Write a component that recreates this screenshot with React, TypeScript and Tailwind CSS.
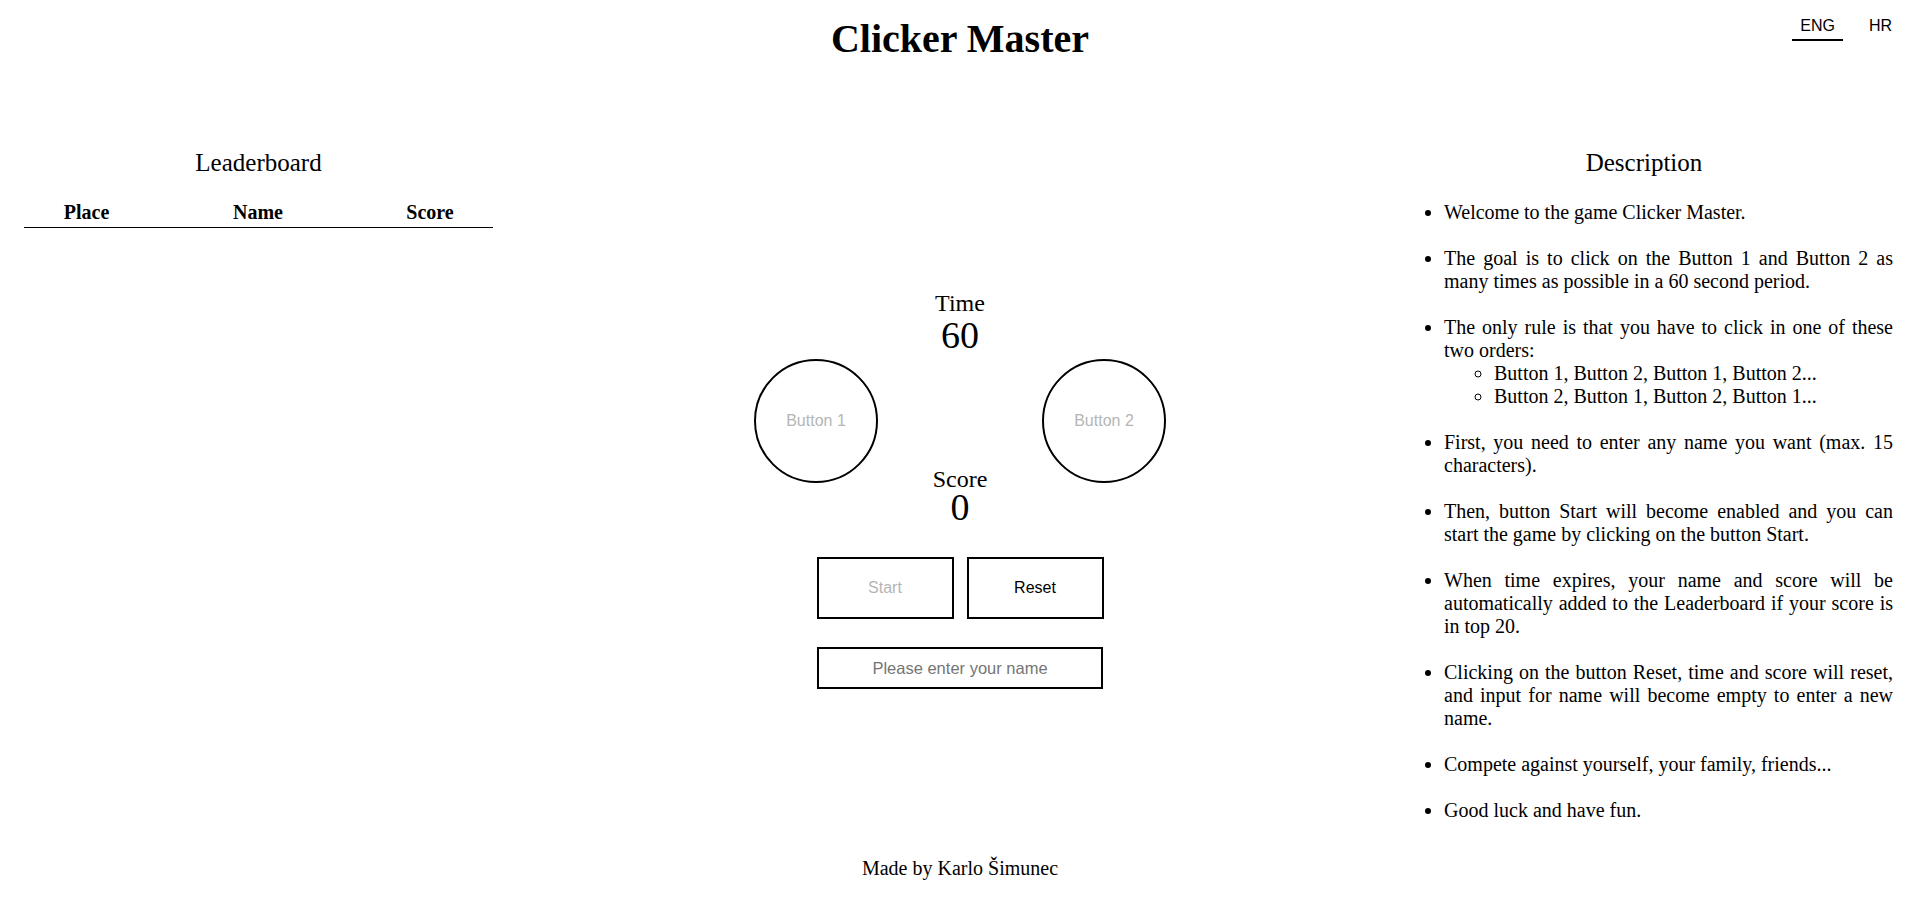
import React from "react"

const rules = [
  "Welcome to the game Clicker Master.",
  "The goal is to click on the Button 1 and Button 2 as many times as possible in a 60 second period.",
  "__orders__",
  "First, you need to enter any name you want (max. 15 characters).",
  "Then, button Start will become enabled and you can start the game by clicking on the button Start.",
  "When time expires, your name and score will be automatically added to the Leaderboard if your score is in top 20.",
  "Clicking on the button Reset, time and score will reset, and input for name will become empty to enter a new name.",
  "Compete against yourself, your family, friends...",
  "Good luck and have fun.",
]

function LangSwitch() {
  return (
    <div className="flex items-start justify-end gap-[18px] pr-5 pt-[17px] font-['Liberation_Sans',Arial,sans-serif] text-[16px]">
      <button className="border-b-2 border-black px-2 pb-1 leading-[18px]">ENG</button>
      <button className="border-b-2 border-transparent px-2 pb-1 leading-[18px]">HR</button>
    </div>
  )
}

function Leaderboard() {
  return (
    <section className="ml-6 w-[469px]">
      <h2 className="text-center text-[25px] leading-[29px]">Leaderboard</h2>
      <div className="mt-6 grid grid-cols-[125px_218px_126px] border-b border-black pb-[3px] text-center font-bold leading-[23px]">
        <div>Place</div>
        <div>Name</div>
        <div>Score</div>
      </div>
    </section>
  )
}

function Game() {
  const sans = "font-['Liberation_Sans',Arial,sans-serif] text-[16px]"
  return (
    <div className="mt-[143px] flex w-[412px] flex-col items-center">
      <div className="text-[24px] leading-[25px]">Time</div>
      <div className="text-[38px] leading-[38px]">60</div>
      <div className="mt-[5px] flex items-start">
        <button className={`flex h-[124px] w-[124px] items-center justify-center rounded-full border-2 border-black text-[#b5b5b5] ${sans}`}>
          Button 1
        </button>
        <div className="mt-[110px] flex w-[164px] flex-col items-center">
          <div className="text-[24px] leading-[21px]">Score</div>
          <div className="text-[38px] leading-[34px]">0</div>
        </div>
        <button className={`flex h-[124px] w-[124px] items-center justify-center rounded-full border-2 border-black text-[#b5b5b5] ${sans}`}>
          Button 2
        </button>
      </div>
      <div className="mt-[33px] flex gap-[13px]">
        <button className={`h-[62px] w-[137px] border-2 border-black text-[#b5b5b5] ${sans}`}>Start</button>
        <button className={`h-[62px] w-[137px] border-2 border-black text-black ${sans}`}>Reset</button>
      </div>
      <input
        placeholder="Please enter your name"
        className="mt-[28px] h-[42px] w-[286px] border-2 border-black text-center font-['Liberation_Sans',Arial,sans-serif] text-[16.5px] outline-none placeholder:text-[#757575]"
      />
    </div>
  )
}

function Description() {
  return (
    <section className="ml-auto mr-[27px] w-[498px]">
      <h2 className="text-center text-[25px] leading-[29px]">Description</h2>
      <ul className="mt-6 list-disc space-y-[23px] pl-[49px] text-justify leading-[23px]">
        {rules.map((r) =>
          r === "__orders__" ? (
            <li key={r}>
              The only rule is that you have to click in one of these two orders:
              <ul className="list-[circle] pl-[50px] text-left">
                <li>Button 1, Button 2, Button 1, Button 2...</li>
                <li>Button 2, Button 1, Button 2, Button 1...</li>
              </ul>
            </li>
          ) : (
            <li key={r}>{r}</li>
          )
        )}
      </ul>
    </section>
  )
}

export default function App() {
  return (
    <div className="min-h-screen bg-white font-['Liberation_Serif','Times_New_Roman',serif] text-[20px] text-black">
      <header className="grid grid-cols-[1fr_auto_1fr]">
        <div />
        <h1 className="mt-4 text-[40px] font-bold leading-[46px]">Clicker Master</h1>
        <LangSwitch />
      </header>
      <main className="mt-[86px] grid grid-cols-[1fr_auto_1fr] items-start">
        <Leaderboard />
        <Game />
        <Description />
      </main>
      <footer className="mt-[35px] pb-[17px] text-center leading-[23px]">Made by Karlo Šimunec</footer>
    </div>
  )
}
